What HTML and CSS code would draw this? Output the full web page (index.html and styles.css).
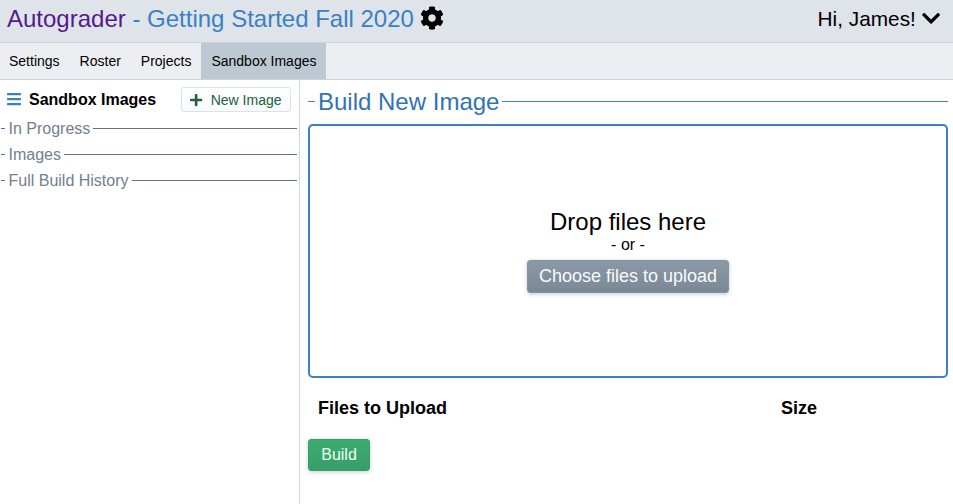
FILE: index.html
```
<!DOCTYPE html>
<html lang="en">
<head>
<meta charset="utf-8">
<title>Autograder</title>
<link rel="stylesheet" href="styles.css">
</head>
<body>
<header class="header">
  <div class="title"><a class="home">Autograder</a><span class="course"> - Getting Started Fall 2020</span>
    <svg class="cog" viewBox="0 0 512 512"><path d="M487.4 315.7l-42.6-24.6c4.3-23.2 4.3-47 0-70.2l42.6-24.6c4.9-2.8 7.1-8.6 5.5-14-11.1-35.6-30-67.8-54.7-94.6-3.8-4.1-10-5.1-14.8-2.3L380.8 110c-17.9-15.4-38.5-27.3-60.8-35.1V25.8c0-5.6-3.9-10.5-9.4-11.7-36.7-8.2-74.3-7.8-109.2 0-5.5 1.2-9.4 6.1-9.4 11.7V75c-22.2 7.9-42.8 19.8-60.8 35.1L88.7 85.5c-4.9-2.8-11-1.9-14.8 2.3-24.7 26.7-43.6 58.9-54.7 94.6-1.7 5.4.6 11.2 5.5 14L67.3 221c-4.3 23.2-4.3 47 0 70.2l-42.6 24.6c-4.9 2.8-7.1 8.6-5.5 14 11.1 35.6 30 67.8 54.7 94.6 3.8 4.1 10 5.1 14.8 2.3l42.6-24.6c17.9 15.4 38.5 27.3 60.8 35.1v49.2c0 5.6 3.9 10.5 9.4 11.7 36.7 8.2 74.3 7.8 109.2 0 5.5-1.2 9.4-6.1 9.4-11.7v-49.2c22.2-7.9 42.8-19.8 60.8-35.1l42.6 24.6c4.9 2.8 11 1.9 14.8-2.3 24.7-26.7 43.6-58.9 54.7-94.6 1.5-5.5-.7-11.3-5.6-14.1zM256 336c-44.1 0-80-35.9-80-80s35.9-80 80-80 80 35.9 80 80-35.9 80-80 80z"/></svg>
  </div>
  <div class="user"><span>Hi, James!</span>
    <svg class="chevron" viewBox="0 0 448 512"><path d="M207.029 381.476L12.686 187.132c-9.373-9.373-9.373-24.569 0-33.941l22.667-22.667c9.357-9.357 24.522-9.375 33.901-.04L224 284.505l154.745-154.021c9.379-9.335 24.544-9.317 33.901.04l22.667 22.667c9.373 9.373 9.373 24.569 0 33.941L240.971 381.476c-9.373 9.372-24.569 9.372-33.942 0z"/></svg>
  </div>
</header>
<nav class="nav">
  <a class="tab">Settings</a>
  <a class="tab">Roster</a>
  <a class="tab">Projects</a>
  <a class="tab active">Sandbox Images</a>
</nav>
<div class="body">
  <aside class="sidebar">
    <div class="sidebar-header">
      <svg class="bars" viewBox="0 0 448 512"><path d="M16 132h416c8.8 0 16-7.2 16-16V76c0-8.800-7.200-16-16-16H16C7.200 60 0 67.200 0 76v40c0 8.800 7.200 16 16 16zm0 160h416c8.800 0 16-7.200 16-16v-40c0-8.800-7.200-16-16-16H16c-8.800 0-16 7.200-16 16v40c0 8.800 7.200 16 16 16zm0 160h416c8.800 0 16-7.200 16-16v-40c0-8.800-7.200-16-16-16H16c-8.800 0-16 7.200-16 16v40c0 8.800 7.200 16 16 16z"/></svg>
      <span class="sidebar-title">Sandbox Images</span>
      <button class="new-image"><svg class="plus" viewBox="0 0 448 512"><path d="M416 208H272V64c0-17.670-14.330-32-32-32h-32c-17.670 0-32 14.330-32 32v144H32c-17.670 0-32 14.330-32 32v32c0 17.670 14.330 32 32 32h144v144c0 17.670 14.330 32 32 32h32c17.670 0 32-14.330 32-32V304h144c17.670 0 32-14.330 32-32v-32c0-17.670-14.330-32-32-32z"/></svg>New Image</button>
    </div>
    <div class="legend">In Progress</div>
    <div class="legend">Images</div>
    <div class="legend">Full Build History</div>
  </aside>
  <main class="main">
    <div class="legend main-legend">Build New Image</div>
    <section class="dropzone">
      <div class="drop-text">Drop files here</div>
      <div class="or-text">- or -</div>
      <button class="choose">Choose files to upload</button>
    </section>
    <div class="files-header"><span>Files to Upload</span><span>Size</span></div>
    <button class="build">Build</button>
  </main>
</div>
</body>
</html>
```
FILE: styles.css
```
* { box-sizing: border-box; }
body {
  margin: 0;
  height: 100vh;
  display: flex;
  flex-direction: column;
  overflow: hidden;
  font-family: "Liberation Sans", Arial, sans-serif;
  font-size: 16px;
  color: #000;
  background: #fff;
}
svg { display: block; flex: none; fill: currentColor; }
button { font-family: inherit; margin: 0; display: flex; align-items: center; justify-content: center; }

.header {
  height: 43px;
  flex: none;
  display: flex;
  justify-content: space-between;
  padding: 0 13px 0 7px;
  background: #dfe3ea;
  border-bottom: 1px solid #ccd3da;
}
.title { display: flex; align-items: center; height: 37px; font-size: 24px; white-space: pre; }
.home { color: #551a8b; }
.course { color: #3a81c4; }
.cog { width: 24px; height: 24px; margin: 0 0 1px 6.500px; }
.user { display: flex; align-items: center; height: 37px; font-size: 20.8px; }
.chevron { width: 18.200px; height: 20.800px; margin: 0 0 1px 6px; }

.nav {
  height: 37px;
  flex: none;
  display: flex;
  background: #edeef2;
  border-bottom: 1px solid #ccd3da;
}
.tab { padding: 0 10px; font-size: 14px; line-height: 36px; }
.tab:first-child { padding-left: 9px; }
.active { background: #bec8d2; }

.body { display: flex; flex: 1; min-height: 0; }
.sidebar { width: 300px; flex: none; border-right: 1px solid #ccd9e8; }
.sidebar-header { height: 35px; display: flex; align-items: center; padding: 4px 8px 0 7px; }
.bars { width: 14px; height: 16px; margin-bottom: 2px; color: #3a81c4; }
.sidebar-title { margin-left: 8px; font-weight: bold; }
.new-image {
  width: 110px;
  height: 25px;
  margin-left: auto;
  padding: 0;
  gap: 8px;
  font-size: 14px;
  color: #22603f;
  background: linear-gradient(#fff, #f7fafc);
  border: 1px solid #dce1ea;
  border-radius: 3px;
}
.plus { width: 12.25px; height: 14px; }

.legend {
  display: flex;
  align-items: center;
  height: 26px;
  margin: 0 2px 0 1px;
  line-height: 20px;
  white-space: nowrap;
  color: #718091;
}
.sidebar-header + .legend { margin-top: 1px; }
.legend::before, .legend::after { content: ""; height: 1px; margin-bottom: 2px; background: #607486; }
.legend::before { width: 4px; margin-right: 3.500px; }
.legend::after { flex: 1; margin-left: 3px; }

.main { flex: 1; min-width: 0; padding: 8px 5px 0 8px; }
.main-legend { height: 28px; margin: 0; font-size: 24px; color: #3273b5; }
.main-legend::before, .main-legend::after { background: #4181bd; }
.main-legend::before { width: 7px; margin-right: 3px; }
.dropzone {
  height: 254px;
  margin-top: 8px;
  padding-bottom: 2px;
  display: flex;
  flex-direction: column;
  align-items: center;
  justify-content: center;
  border: 2px solid #3a81c4;
  border-radius: 5px;
}
.drop-text { font-size: 24px; line-height: 28px; }
.or-text { line-height: 18px; }
.choose {
  width: 202px;
  height: 33px;
  margin-top: 6px;
  padding: 0;
  font-size: 18px;
  color: #f7fafc;
  background: linear-gradient(#8b98a6, #7b8896);
  border: 1px solid #84919e;
  border-radius: 3px;
  box-shadow: 0 1px 4px rgba(60, 80, 110, .3);
}
.files-header {
  display: grid;
  grid-template-columns: 463px 1fr;
  padding: 0 10px;
  margin-top: 20px;
  font-size: 18px;
  line-height: 20px;
  font-weight: bold;
}
.build {
  width: 62px;
  height: 32px;
  margin-top: 21px;
  padding: 0;
  font-size: 16px;
  color: #f0fff4;
  background: linear-gradient(#3cad71, #389e67);
  border: 1px solid #389d67;
  border-radius: 3px;
  box-shadow: 0 1px 4px rgba(60, 80, 110, .3);
}
```
